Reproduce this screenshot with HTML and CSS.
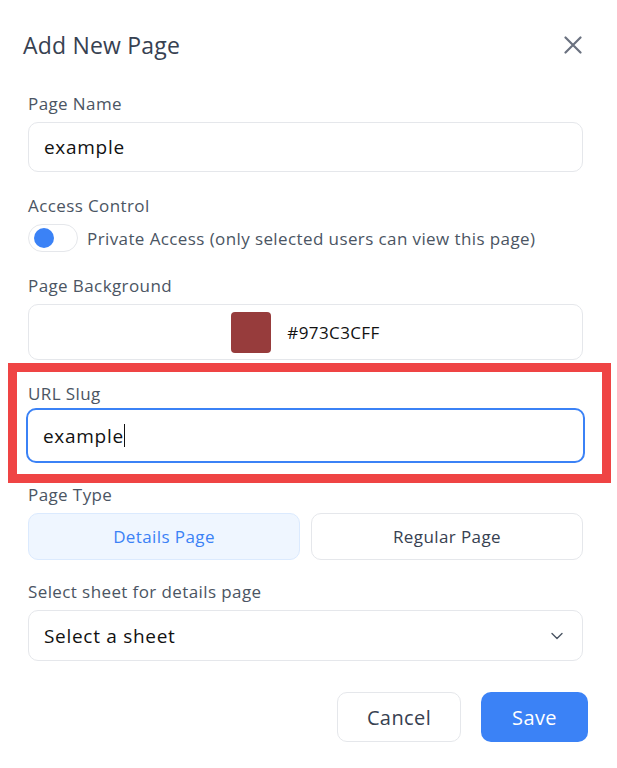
FILE: index.html
```html
<!DOCTYPE html>
<html lang="en">
<head>
<meta charset="utf-8">
<title>Add New Page</title>
<link rel="stylesheet" href="styles.css">
</head>
<body>
<div class="dialog">
  <div class="header">
    <h2 class="title">Add New Page</h2>
    <button class="close" aria-label="Close">
      <svg width="18" height="18" viewBox="0 0 18 18"><path d="M1.5 1.5L16.5 16.5M16.5 1.5L1.5 16.5" stroke="#6b7280" stroke-width="2.2" stroke-linecap="round" fill="none"/></svg>
    </button>
  </div>
  <div class="form">
    <div class="field">
      <div class="label">Page Name</div>
      <div class="input">example</div>
    </div>
    <div class="field">
      <div class="label">Access Control</div>
      <div class="toggle-row">
        <span class="toggle"><span class="knob"></span></span>
        <span class="toggle-text">Private Access (only selected users can view this page)</span>
      </div>
    </div>
    <div class="field">
      <div class="label">Page Background</div>
      <div class="color-box">
        <span class="swatch"></span>
        <span class="color-text">#973C3CFF</span>
      </div>
    </div>
    <div class="field field-slug">
      <div class="label">URL Slug</div>
      <div class="input input-focus">example<span class="caret"></span></div>
      <div class="highlight"></div>
    </div>
    <div class="field field-tight">
      <div class="label">Page Type</div>
      <div class="type-grid">
        <div class="type-btn type-active">Details Page</div>
        <div class="type-btn">Regular Page</div>
      </div>
    </div>
    <div class="field field-tight">
      <div class="label">Select sheet for details page</div>
      <div class="select">
        <span>Select a sheet</span>
        <svg width="12" height="8" viewBox="0 0 12 8"><path d="M1 1.5L6 6.5L11 1.5" stroke="#4b5563" stroke-width="1.4" stroke-linecap="round" stroke-linejoin="round" fill="none"/></svg>
      </div>
    </div>
  </div>
  <div class="actions">
    <button class="btn btn-cancel">Cancel</button>
    <button class="btn btn-save">Save</button>
  </div>
</div>
</body>
</html>
```
FILE: styles.css
```css
* { box-sizing: border-box; }
body {
  margin: 0;
  background: #ffffff;
  font-family: "Open Sans", "Noto Sans", sans-serif;
  letter-spacing: 0.4px;
}
.dialog {
  padding: 31px 34px 0 28px;
}
.header {
  display: flex;
  justify-content: space-between;
  align-items: center;
  height: 28px;
  margin-left: -5px;
  margin-right: 1px;
}
.title {
  margin: 0;
  font-size: 23px;
  font-weight: 400;
  color: #374151;
  line-height: 28px;
  letter-spacing: 0.2px;
}
.close {
  border: 0;
  background: none;
  padding: 0;
  width: 18px;
  height: 18px;
  display: flex;
}
.form {
  margin-top: 33px;
  display: flex;
  flex-direction: column;
}
.field { position: relative; display: flex; flex-direction: column; }
.field + .field { margin-top: 22px; }
.field.field-tight { margin-top: 20px; }
.label {
  font-size: 17px;
  line-height: 24px;
  color: #4b5563;
  margin-bottom: 6px;
}
.field-slug .label { margin-bottom: 2px; }
.input {
  height: 50px;
  border: 1px solid #e5e7eb;
  border-radius: 10px;
  padding: 0 15px;
  display: flex;
  align-items: center;
  font-size: 19px;
  letter-spacing: 0.7px;
  color: #111111;
}
.input-focus {
  height: 55px;
  border: 2px solid #3b82f6;
  margin: 0 -2px;
  padding: 0 15px;
}
.caret {
  display: inline-block;
  width: 1px;
  height: 23px;
  background: #111111;
  margin-left: 0;
}
.highlight {
  position: absolute;
  top: -19px;
  left: -20px;
  right: -28px;
  bottom: -20px;
  border: 9px solid #ef4444;
  pointer-events: none;
}
.toggle-row {
  display: flex;
  align-items: center;
  gap: 9px;
}
.toggle {
  width: 50px;
  height: 28px;
  border: 1px solid #e5e7eb;
  border-radius: 14px;
  background: #fff;
  display: flex;
  align-items: center;
  padding-left: 5px;
}
.knob {
  width: 20px;
  height: 20px;
  border-radius: 50%;
  background: #3b82f6;
}
.toggle-text {
  font-size: 17px;
  color: #4b5563;
}
.color-box {
  height: 56px;
  border: 1px solid #e5e7eb;
  border-radius: 10px;
  display: flex;
  align-items: center;
  justify-content: center;
  gap: 16px;
}
.swatch {
  width: 40px;
  height: 41px;
  border-radius: 4px;
  background: #973c3c;
}
.color-text {
  font-size: 17px;
  color: #111111;
}
.type-grid {
  display: grid;
  grid-template-columns: 1fr 1fr;
  gap: 11px;
}
.type-btn {
  height: 47px;
  border: 1px solid #e5e7eb;
  border-radius: 10px;
  display: flex;
  align-items: center;
  justify-content: center;
  font-size: 17px;
  color: #374151;
}
.type-active {
  background: #eff6ff;
  border-color: #dbeafe;
  color: #3b82f6;
}
.select {
  height: 51px;
  border: 1px solid #e5e7eb;
  border-radius: 10px;
  display: flex;
  align-items: center;
  justify-content: space-between;
  padding: 0 19px 0 15px;
  font-size: 19px;
  letter-spacing: 0.7px;
  color: #111111;
}
.actions {
  display: flex;
  justify-content: flex-end;
  gap: 20px;
  margin-top: 31px;
  margin-right: -5px;
}
.btn {
  height: 50px;
  border-radius: 10px;
  font-family: inherit;
  font-size: 20px;
  letter-spacing: 0.4px;
  cursor: pointer;
}
.btn-cancel {
  width: 124px;
  background: #fff;
  border: 1px solid #e5e7eb;
  color: #374151;
}
.btn-save {
  width: 107px;
  background: #3b82f6;
  border: 0;
  color: #fff;
}
```
